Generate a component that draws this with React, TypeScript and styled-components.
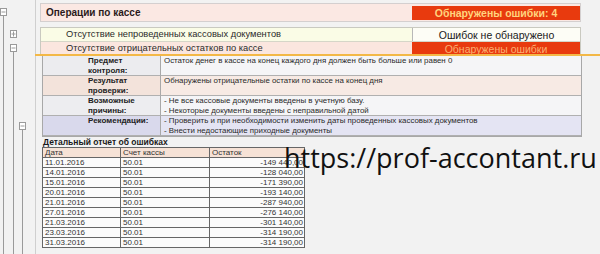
import React from "react";
import styled, { createGlobalStyle } from "styled-components";

const GlobalStyle = createGlobalStyle`
  html, body {
    margin: 0;
    padding: 0;
    background: #f2f2f2;
    font-family: "Liberation Sans", Arial, sans-serif;
    color: #1a1a1a;
  }
`;

const Page = styled.div`
  position: relative;
  display: flex;
  width: 600px;
  height: 254px;
  overflow: hidden;
`;

const Gutter = styled.div`
  width: 35px;
  flex-shrink: 0;
`;

const Content = styled.div`
  flex: 1;
  border-left: 1px solid #cfcfcf;
  padding: 3px 0 0 4px;
  display: flex;
  flex-direction: column;
`;

const HeaderRow = styled.div`
  width: 541px;
  height: 19px;
  display: flex;
  align-items: center;
  background: #fbe8e3;
  border: 1px solid #d4cfcf;
  box-sizing: border-box;
`;

const HeaderTitle = styled.div`
  flex: 1;
  padding-left: 5px;
  font-size: 10px;
  font-weight: bold;
  color: #2a1a1a;
`;

const StatusCell = styled.div<{ $bold?: boolean; $ok?: boolean }>`
  width: 168px;
  height: ${(p) => (p.$bold ? "14px" : "100%")};
  box-sizing: border-box;
  display: flex;
  align-items: center;
  justify-content: center;
  font-size: 10.5px;
  font-weight: ${(p) => (p.$bold ? "bold" : "normal")};
  background: ${(p) => (p.$ok ? "#fdfdf6" : "#e83a0e")};
  color: ${(p) => (p.$ok ? "#1a1a1a" : p.$bold ? "#ffd47e" : "#fbb071")};
  border-left: ${(p) => (p.$ok ? "1px solid #b8b8b8" : "none")};
`;

const CheckList = styled.div`
  margin-top: 5px;
  width: 541px;
  border: 1px solid #c9c9c0;
  border-bottom: none;
  box-sizing: border-box;
`;

const CheckRow = styled.div<{ $tone: "ok" | "bad" }>`
  height: ${(p) => (p.$tone === "ok" ? "13px" : "14px")};
  display: flex;
  align-items: stretch;
  background: ${(p) => (p.$tone === "ok" ? "#fafce6" : "#fbe6df")};
  border-bottom: ${(p) => (p.$tone === "ok" ? "1px solid #d6d6c8" : "none")};
`;

const CheckTitle = styled.div`
  flex: 1;
  padding-left: 25px;
  font-size: 9.3px;
  line-height: 13px;
  color: #2a2a2a;
`;

const SelectionLine = styled.div`
  position: relative;
  height: 2px;
  margin: -2px 0 0 -5px;
  background: #f3b847;
`;

const Details = styled.div`
  margin-left: 2px;
  width: 540px;
  display: grid;
  grid-template-columns: 118px 1fr;
  border: 1px solid #a8a8a8;
  border-top: none;
  box-sizing: border-box;
`;

const DetailLabel = styled.div<{ $bg: string }>`
  height: 20px;
  padding-left: 45px;
  box-sizing: border-box;
  background: ${(p) => p.$bg};
  border-right: 1px solid #a8a8a8;
  border-bottom: 1px solid #b0b0b0;
  font-size: 8px;
  line-height: 9.5px;
  font-weight: bold;
  color: #222;
  white-space: pre-line;
`;

const DetailValue = styled.div<{ $bg: string }>`
  height: 20px;
  padding-left: 3px;
  box-sizing: border-box;
  background: ${(p) => p.$bg};
  border-bottom: 1px solid #b0b0b0;
  font-size: 7.9px;
  line-height: 9.5px;
  color: #2a2a2a;
  white-space: pre-line;
`;

const ReportTitle = styled.div`
  margin: 1px 0 0 3px;
  font-size: 8.5px;
  line-height: 9px;
  font-weight: bold;
  color: #1a1a1a;
`;

const ErrorTable = styled.table`
  margin-left: 2px;
  border-collapse: collapse;
  width: 253px;
  table-layout: fixed;
  font-size: 8px;
  background: #fbfbfb;
  border: 1px solid #555;
`;

const Th = styled.th<{ $w: number }>`
  width: ${(p) => p.$w}px;
  height: 9px;
  padding: 0 0 0 2px;
  text-align: left;
  font-weight: normal;
  background: #f6e2d6;
  border: 1px solid #666;
  line-height: 9px;
  color: #333;
`;

const Td = styled.td<{ $right?: boolean }>`
  height: 9px;
  padding: 0 1px 0 2px;
  border: 1px solid #666;
  line-height: 9px;
  text-align: ${(p) => (p.$right ? "right" : "left")};
  color: #333;
`;

const Watermark = styled.div`
  position: absolute;
  left: 284px;
  top: 143px;
  font-family: "Open Sans", sans-serif;
  font-size: 27px;
  line-height: 30px;
  color: #111;
`;

const TreeLines: React.FC = () => (
  <svg width="35" height="254" viewBox="0 0 35 254">
    <g stroke="#9a9a9a" strokeWidth="1" fill="none">
      <line x1="3.5" y1="15" x2="3.5" y2="254" />
      <line x1="13.5" y1="52" x2="13.5" y2="254" />
      <line x1="22.5" y1="130" x2="22.5" y2="254" />
      <rect x="0.5" y="8.5" width="6" height="7" fill="#fff" />
      <line x1="1.5" y1="12" x2="5.5" y2="12" />
      <rect x="10.5" y="30.5" width="6" height="7" fill="#fff" />
      <line x1="11.5" y1="34" x2="15.5" y2="34" />
      <line x1="13.5" y1="31.5" x2="13.5" y2="36.5" />
      <rect x="10.5" y="44.5" width="6" height="7" fill="#fff" />
      <line x1="11.5" y1="48" x2="15.5" y2="48" />
      <rect x="19.5" y="122.5" width="6" height="7" fill="#fff" />
      <line x1="20.5" y1="126" x2="24.5" y2="126" />
    </g>
  </svg>
);

const details = [
  {
    label: "Предмет\nконтроля:",
    value: "Остаток денег в кассе на конец каждого дня должен быть больше или равен 0",
    lbg: "#ececef",
    vbg: "#f5f5f7",
  },
  {
    label: "Результат\nпроверки:",
    value: "Обнаружены отрицательные остатки по кассе на конец дня",
    lbg: "#f3e3db",
    vbg: "#f7eae4",
  },
  {
    label: "Возможные\nпричины:",
    value:
      "- Не все кассовые документы введены в учетную базу.\n- Некоторые документы введены с неправильной датой",
    lbg: "#ededf0",
    vbg: "#f5f5f7",
  },
  {
    label: "Рекомендации:",
    value:
      "- Проверить и при необходимости изменить даты проведенных кассовых документов\n- Внести недостающие приходные документы",
    lbg: "#d9d9ec",
    vbg: "#e4e4f3",
  },
];

const rows = [
  ["11.01.2016", "-149 440,00"],
  ["14.01.2016", "-128 040,00"],
  ["15.01.2016", "-171 390,00"],
  ["20.01.2016", "-193 140,00"],
  ["21.01.2016", "-287 940,00"],
  ["27.01.2016", "-276 140,00"],
  ["21.03.2016", "-301 140,00"],
  ["23.03.2016", "-314 190,00"],
  ["31.03.2016", "-314 190,00"],
];

const App: React.FC = () => {
  return (
    <Page>
      <GlobalStyle />
      <Gutter>
        <TreeLines />
      </Gutter>
      <Content>
        <HeaderRow>
          <HeaderTitle>Операции по кассе</HeaderTitle>
          <StatusCell $bold>Обнаружены ошибки: 4</StatusCell>
        </HeaderRow>
        <CheckList>
          <CheckRow $tone="ok">
            <CheckTitle>Отсутствие непроведенных кассовых документов</CheckTitle>
            <StatusCell $ok>Ошибок не обнаружено</StatusCell>
          </CheckRow>
          <CheckRow $tone="bad">
            <CheckTitle>Отсутствие отрицательных остатков по кассе</CheckTitle>
            <StatusCell>Обнаружены ошибки</StatusCell>
          </CheckRow>
        </CheckList>
        <SelectionLine />
        <Details>
          {details.map((d) => (
            <React.Fragment key={d.label}>
              <DetailLabel $bg={d.lbg}>{d.label}</DetailLabel>
              <DetailValue $bg={d.vbg}>{d.value}</DetailValue>
            </React.Fragment>
          ))}
        </Details>
        <ReportTitle>Детальный отчет об ошибках</ReportTitle>
        <ErrorTable>
          <thead>
            <tr>
              <Th $w={75}>Дата</Th>
              <Th $w={86}>Счет кассы</Th>
              <Th $w={92}>Остаток</Th>
            </tr>
          </thead>
          <tbody>
            {rows.map(([date, sum], i) => (
              <tr key={i}>
                <Td>{date}</Td>
                <Td>50.01</Td>
                <Td $right>{sum}</Td>
              </tr>
            ))}
          </tbody>
        </ErrorTable>
      </Content>
      <Watermark>https://prof-accontant.ru</Watermark>
    </Page>
  );
};

export default App;
